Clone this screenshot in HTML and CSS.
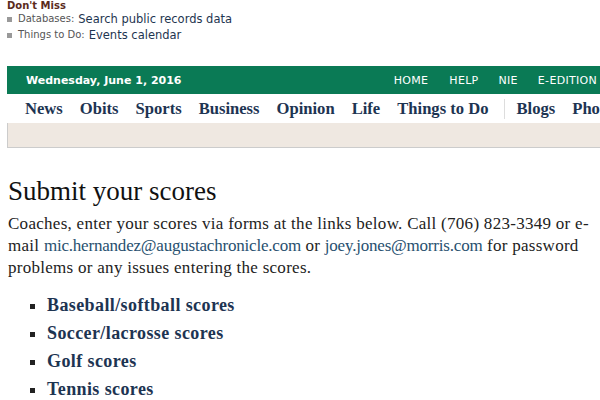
FILE: index.html
```html
<!DOCTYPE html>
<html>
<head>
<meta charset="utf-8">
<link rel="stylesheet" href="styles.css">
</head>
<body>
<div class="miss">
  <div class="miss-title">Don't Miss</div>
  <ul class="miss-list">
    <li><span class="lbl">Databases:</span> <a href="#">Search public records data</a></li>
    <li><span class="lbl">Things to Do:</span> <a href="#">Events calendar</a></li>
  </ul>
</div>
<div class="topbar">
  <span class="date">Wednesday, June 1, 2016</span>
  <nav class="util">
    <a href="#">HOME</a><a href="#">HELP</a><a href="#">NIE</a><a href="#">E-EDITION</a>
  </nav>
</div>
<nav class="mainnav">
  <a href="#">News</a><a href="#">Obits</a><a href="#">Sports</a><a href="#">Business</a><a href="#">Opinion</a><a href="#">Life</a><a href="#" class="sep">Things to Do</a><a href="#">Blogs</a><a href="#">Photos</a>
</nav>
<div class="subbar"></div>
<main class="content">
  <h1>Submit your scores</h1>
  <p>Coaches, enter your scores via forms at the links below. Call (706) 823-3349 or e-mail <a href="#">mic.hernandez@augustachronicle.com</a> or <a href="#">joey.jones@morris.com</a> for password problems or any issues entering the scores.</p>
  <ul class="scores">
    <li><a href="#">Baseball/softball scores</a></li>
    <li><a href="#">Soccer/lacrosse scores</a></li>
    <li><a href="#">Golf scores</a></li>
    <li><a href="#">Tennis scores</a></li>
  </ul>
</main>
</body>
</html>
```
FILE: styles.css
```css
html, body { margin: 0; padding: 0; background: #fff; overflow: hidden; }
body { width: 600px; }
a { text-decoration: none; }

.miss { padding: 0 0 0 7px; font-family: "DejaVu Sans", Verdana, sans-serif; }
.miss-title { font-size: 10px; font-weight: bold; color: #5b2b1c; line-height: 10px; padding-top: 1px; }
.miss-list { list-style: none; margin: 0; padding: 0; }
.miss-list li { font-size: 10px; line-height: 16px; color: #555; display: flex; align-items: center; gap: 4px; }
.miss-list li::before { content: ""; width: 5px; height: 5px; background: #999; margin-right: 2px; }
.miss-list a { font-size: 11.5px; color: #1e3550; }

.topbar { margin: 23px 0 0 7px; height: 28px; background: #0a7a55; display: flex; align-items: center; justify-content: space-between; padding-left: 19px; font-family: "DejaVu Sans", Verdana, sans-serif; overflow: hidden; }
.date { color: #fff; font-weight: bold; font-size: 11px; }
.util { display: flex; gap: 20px; margin-right: 3px; flex-shrink: 0; }
.util a { color: #fff; font-size: 11px; letter-spacing: 0.3px; white-space: nowrap; }
.util a:first-child { margin-right: 1px; }

.mainnav { margin-left: 7px; height: 29px; display: flex; align-items: center; padding-left: 18px; gap: 17px; font-family: "Liberation Serif", Georgia, serif; white-space: nowrap; overflow: hidden; }
.mainnav a { color: #1d3452; font-weight: bold; font-size: 16.6px; flex-shrink: 0; }
.mainnav .sep { border-right: 1px solid #ddd; padding-right: 15px; margin-right: -5px; }

.subbar { margin-left: 7px; height: 24px; background: #efe8e1; border-left: 1px solid #ccc; border-bottom: 1px solid #ccc; }

.content { padding: 0 0 0 8px; font-family: "Liberation Serif", Georgia, serif; color: #222; }
h1 { font-weight: normal; font-size: 27px; margin: 27px 0 5px; line-height: 32px; color: #111; }
p { font-size: 17px; letter-spacing: 0.28px; line-height: 22px; margin: 0; padding-top: 1px; }
p a { color: #28506f; letter-spacing: -0.2px; }
.scores { list-style: square; margin: 12px 0 0; padding-left: 39px; }
.scores li { font-size: 18px; letter-spacing: 0.4px; line-height: 28px; }
.scores a { color: #1d3452; font-weight: bold; }
```
